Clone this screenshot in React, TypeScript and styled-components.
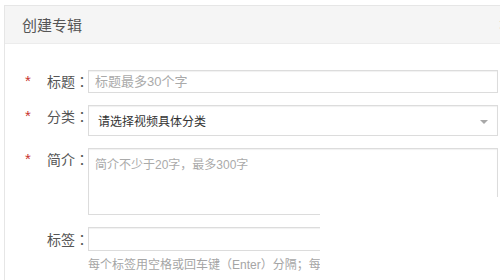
import styled, { createGlobalStyle } from "styled-components";

const GlobalStyle = createGlobalStyle`
  html, body {
    margin: 0;
    padding: 0;
    background: #fff;
    overflow: hidden;
  }
  body {
    font-family: "Liberation Sans", "Noto Sans CJK SC", sans-serif;
  }
`;

const Page = styled.div`
  position: relative;
  width: 500px;
  height: 280px;
  overflow: hidden;
`;

const Dialog = styled.div`
  margin: 5px 0 0 4px;
  width: 530px;
  height: 300px;
  border: 1px solid #e6e6e6;
  background: #fff;
`;

const Header = styled.div`
  display: flex;
  align-items: center;
  justify-content: space-between;
  height: 37px;
  padding: 0 26px 0 17px;
  background: #f5f5f5;
  border-bottom: 1px solid #ececec;
`;

const HeaderTitle = styled.span`
  font-size: 15px;
  color: #555;
`;

const Close = styled.span`
  font-size: 18px;
  color: #999;
  line-height: 1;
`;

const Body = styled.div`
  display: flex;
  flex-direction: column;
  gap: 12px;
  padding-top: 26px;
`;

const Row = styled.div`
  display: grid;
  grid-template-columns: 42px 41px 410px;
  align-items: start;
`;

const Star = styled.span`
  padding-left: 20px;
  color: #c8332f;
  font-size: 15px;
  line-height: 22px;
`;

const Label = styled.span<{ $top?: number }>`
  font-size: 14px;
  color: #555;
  line-height: 22px;
  margin-top: ${(p) => p.$top ?? 0}px;
  white-space: nowrap;
`;

const Colon = styled.span`
  font-family: "Noto Sans CJK TC", sans-serif;
`;

const fieldBase = `
  box-sizing: border-box;
  width: 100%;
  border: 1px solid #dcdcdc;
  box-shadow: inset 0 1px 1px rgba(0, 0, 0, 0.06);
  background: #fff;
  outline: none;
  font-family: "Liberation Sans", "Noto Sans CJK SC", sans-serif;
  color: #333;
`;

const TextInput = styled.input<{ $h: number }>`
  ${fieldBase}
  height: ${(p) => p.$h}px;
  padding: 0 6px;
  font-size: 13px;
  &::placeholder {
    color: #aaa;
  }
`;

const Select = styled.div`
  ${fieldBase}
  position: relative;
  display: flex;
  align-items: center;
  height: 31px;
  padding: 0 9px;
  font-size: 12px;
`;

const Caret = styled.span`
  position: absolute;
  right: 9px;
  top: 14px;
  width: 0;
  height: 0;
  border-left: 4px solid transparent;
  border-right: 4px solid transparent;
  border-top: 4px solid #a8a8a8;
`;

const TextArea = styled.textarea`
  ${fieldBase}
  display: block;
  height: 67px;
  padding: 6px 6px;
  resize: none;
  font-size: 12px;
  &::placeholder {
    color: #aaa;
  }
`;

const Field = styled.div`
  display: flex;
  flex-direction: column;
`;

const Hint = styled.div`
  margin-top: 6px;
  font-size: 12px;
  line-height: 16px;
  color: #a5a5a5;
  white-space: nowrap;
`;

const Cover = styled.div`
  position: absolute;
  left: 320px;
  top: 197px;
  right: 0;
  bottom: 0;
  background: #fff;
`;

const FieldLabel = ({ text, top }: { text: string; top?: number }) => (
  <Label $top={top}>
    {text}
    <Colon>：</Colon>
  </Label>
);

export default function App() {
  return (
    <Page>
      <GlobalStyle />
      <Dialog>
        <Header>
          <HeaderTitle>创建专辑</HeaderTitle>
          <Close>×</Close>
        </Header>
        <Body>
          <Row>
            <Star>*</Star>
            <FieldLabel text="标题" />
            <TextInput $h={23} placeholder="标题最多30个字" />
          </Row>
          <Row>
            <Star>*</Star>
            <FieldLabel text="分类" />
            <Select>
              请选择视频具体分类
              <Caret />
            </Select>
          </Row>
          <Row>
            <Star>*</Star>
            <FieldLabel text="简介" />
            <TextArea placeholder="简介不少于20字，最多300字" />
          </Row>
          <Row>
            <span />
            <FieldLabel text="标签" top={1} />
            <Field>
              <TextInput $h={24} />
              <Hint>每个标签用空格或回车键（Enter）分隔；每个标签不超过10个字</Hint>
            </Field>
          </Row>
        </Body>
      </Dialog>
      <Cover />
    </Page>
  );
}
